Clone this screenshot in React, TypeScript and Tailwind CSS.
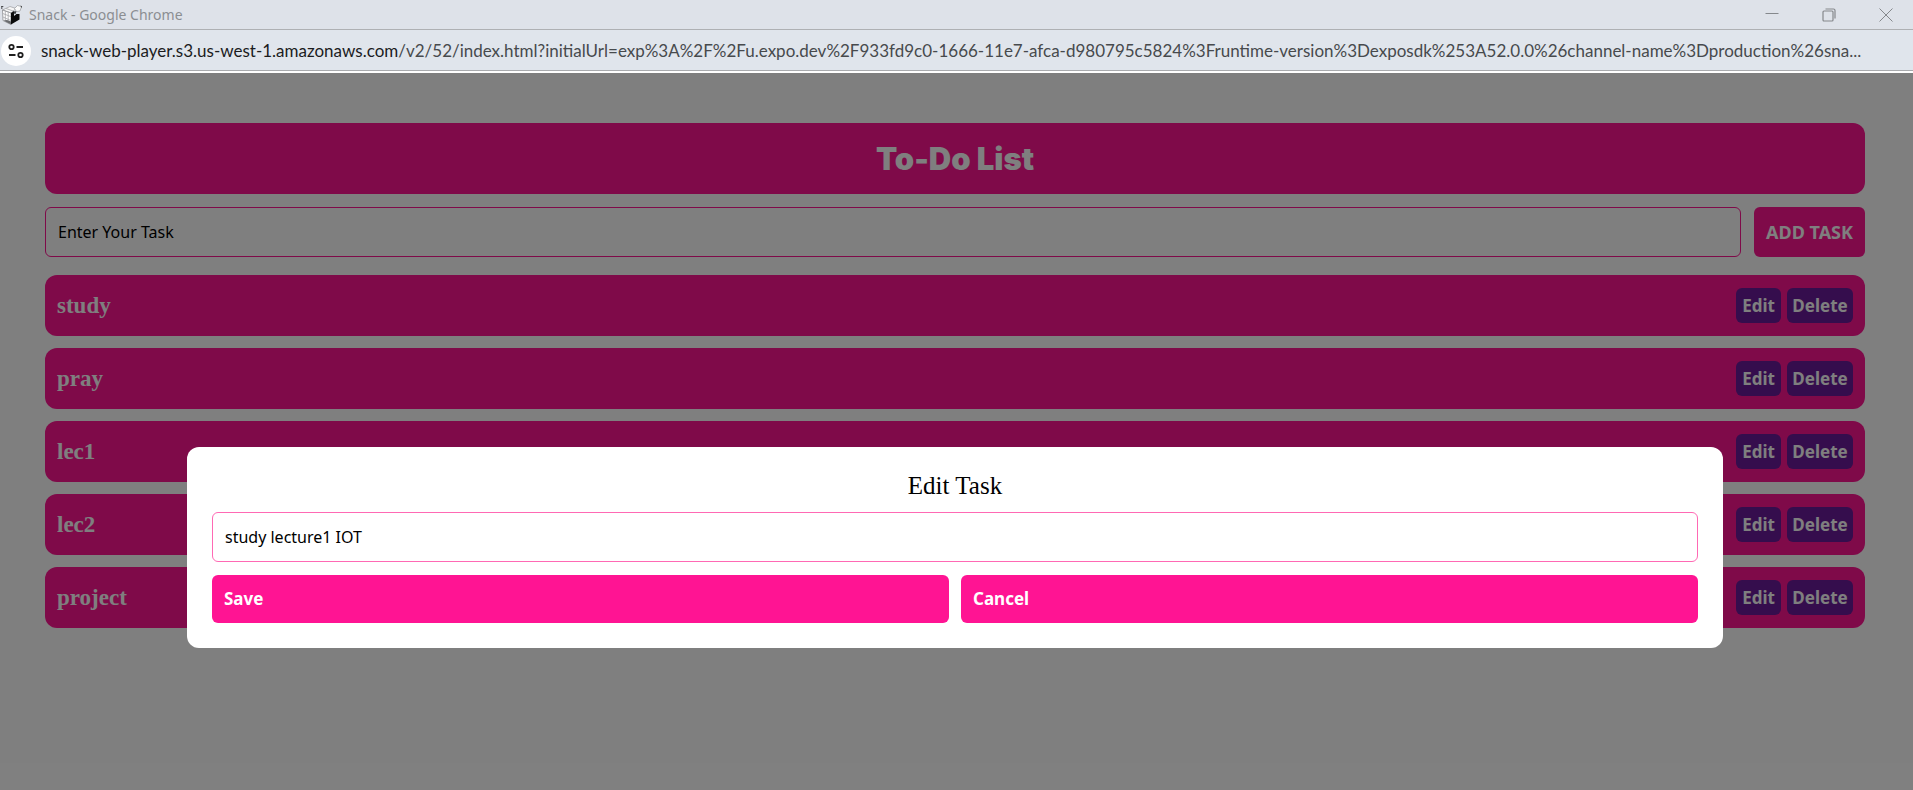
import { useState } from "react";

const HOST = "snack-web-player.s3.us-west-1.amazonaws.com";
const PATH =
  "/v2/52/index.html?initialUrl=exp%3A%2F%2Fu.expo.dev%2F933fd9c0-1666-11e7-afca-d980795c5824%3Fruntime-version%3Dexposdk%253A52.0.0%26channel-name%3Dproduction%26sna...";

function SnackLogo() {
  return (
    <svg width="22" height="22" viewBox="0 0 22 22" aria-hidden="true">
      <path d="M1.500 6 9 2.500l6 2L10 9z" fill="#f6f6f6" stroke="#a3a5a8" strokeWidth=".8" />
      <path d="M1.500 6 10 9v11.500L2 16.500z" fill="#fff" stroke="#8b8d90" strokeWidth=".8" />
      <path d="M1.800 9.500l8.200 3.200M2 13l8 3.600M4.300 7v10.500M7.200 8v11M5 4.500l8 2.800" fill="none" stroke="#a3a5a8" strokeWidth=".8" />
      <path d="M10 9l3-2v5l2.500-2 3 0v5.500L10 20.500z" fill="#0b0b0b" />
      <path d="M2.500 16.500l7.500 4v-3l-4-1.500z" fill="#6a6c6f" />
      <path d="M13.500 4.500l3-3 4 1L19 7l-3.500.5z" fill="#fafafa" stroke="#9a9c9f" strokeWidth=".7" />
      <path d="M13.500 7l2 .5-1 2.500-2-.5zM19.500 1.500l1.500.8-.7 2z" fill="#3a3c3e" />
      <path d="M.3 2.500h2M.8 2v3" stroke="#4a4c4f" strokeWidth="1" />
    </svg>
  );
}

function TitleBar() {
  return (
    <header className="flex h-[30px] items-center border-b border-[#aeb0b3] bg-[#dee2e9] pl-px">
      <SnackLogo />
      <span className="ml-1.5 text-sm leading-5 text-[#8b8e92]">Snack - Google Chrome</span>
      <div className="ml-auto flex h-full items-center gap-[43px] pr-5 text-[#85888c]">
        <button aria-label="Minimize">
          <svg width="14" height="14" viewBox="0 0 14 14" fill="none" stroke="currentColor">
            <path d="M.5 5.500h13" />
          </svg>
        </button>
        <button aria-label="Restore">
          <svg width="14" height="14" viewBox="0 0 14 14" fill="none" stroke="currentColor">
            <rect x="1" y="3" width="10" height="10" rx="1" strokeWidth="1.200" />
            <path d="M3.500 1h8a1.500 1.500 0 0 1 1.500 1.500v8" strokeWidth="1.200" />
          </svg>
        </button>
        <button aria-label="Close">
          <svg width="14" height="14" viewBox="0 0 14 14" fill="none" stroke="currentColor">
            <path d="M.5.5l13 13M13.500.5l-13 13" />
          </svg>
        </button>
      </div>
    </header>
  );
}

function AddressBar() {
  return (
    <div className="flex h-[43px] items-center border-b-2 border-white bg-[#e0e5ec] shadow-[inset_0_-1px_0_#a9abae]">
      <button
        aria-label="View site information"
        className="ml-px flex size-[30px] shrink-0 items-center justify-center rounded-full bg-white"
      >
        <svg width="16" height="16" viewBox="0 0 16 16" fill="none" stroke="#1f1f1f" strokeWidth="1.800">
          <circle cx="3.500" cy="4" r="2.200" />
          <path d="M8.500 4H15M1 12h6.500" />
          <circle cx="12.500" cy="12" r="2.200" />
        </svg>
      </button>
      <p className="ml-2.5 font-['Lato',sans-serif] text-[17px] leading-6 whitespace-nowrap text-[#474a4d]">
        <span className="text-[#1b1c1e]">{HOST}</span>
        {PATH}
      </p>
    </div>
  );
}

function TaskRow({ name, onEdit, onDelete }: { name: string; onEdit: () => void; onDelete: () => void }) {
  return (
    <li className="flex items-center rounded-xl bg-[#ff1493] px-3 py-[13px]">
      <span className="flex-1 font-['Liberation_Serif',serif] text-[23px] leading-6 font-bold text-white">{name}</span>
      <div className="flex gap-1.5">
        <button onClick={onEdit} className="h-[35px] w-[45px] rounded-md bg-[#6a1b9a] text-[17px] font-bold text-white">
          Edit
        </button>
        <button
          onClick={onDelete}
          className="h-[35px] w-[66px] rounded-md bg-[#6a1b9a] text-[17px] font-bold text-white"
        >
          Delete
        </button>
      </div>
    </li>
  );
}

export default function App() {
  const [tasks, setTasks] = useState(["study", "pray", "lec1", "lec2", "project"]);
  const [draft, setDraft] = useState("");
  const [editing, setEditing] = useState<number | null>(0);
  const [editText, setEditText] = useState("study lecture1 IOT");

  const addTask = () => {
    if (!draft.trim()) return;
    setTasks([...tasks, draft.trim()]);
    setDraft("");
  };
  const save = () => {
    setTasks(tasks.map((t, i) => (i === editing ? editText : t)));
    setEditing(null);
  };

  return (
    <div className="flex min-h-screen flex-col overflow-x-hidden font-['Noto_Sans','Open_Sans',sans-serif]">
      <TitleBar />
      <AddressBar />
      <div className="relative flex-1 bg-white">
        <main className="pt-[50px] pr-12 pl-[45px]">
          <h1 className="rounded-xl bg-[#ff1493] py-[15px] text-center font-['Inter',sans-serif] text-[31px] leading-[41px] font-black text-white">
            To-Do List
          </h1>
          <div className="mt-[13px] flex h-[50px] gap-[13px]">
            <input
              aria-label="New task"
              placeholder="Enter Your Task"
              value={draft}
              onChange={(e) => setDraft(e.target.value)}
              className="min-w-0 flex-1 rounded-md border border-[#ff1493] px-3 text-base text-black placeholder:text-black"
            />
            <button onClick={addTask} className="rounded-md bg-[#ff1493] px-3 text-lg font-bold text-white">
              ADD TASK
            </button>
          </div>
          <ul className="mt-[18px] flex flex-col gap-3">
            {tasks.map((name, i) => (
              <TaskRow
                key={i}
                name={name}
                onEdit={() => {
                  setEditing(i);
                  setEditText(name);
                }}
                onDelete={() => setTasks(tasks.filter((_, j) => j !== i))}
              />
            ))}
          </ul>
        </main>
        {editing !== null && (
          <div className="absolute inset-0 bg-black/50 pt-[374px] pr-[190px] pl-[187px]">
            <section role="dialog" aria-labelledby="edit-title" className="rounded-xl bg-white p-[25px]">
              <h2
                id="edit-title"
                className="text-center font-['Liberation_Serif',serif] text-[25px] leading-7 text-black"
              >
                Edit Task
              </h2>
              <input
                aria-labelledby="edit-title"
                value={editText}
                onChange={(e) => setEditText(e.target.value)}
                className="mt-3 h-[50px] w-full rounded-md border border-[#ff69b4] px-3 text-base text-black"
              />
              <div className="mt-[13px] grid grid-cols-2 gap-3">
                <button
                  onClick={save}
                  className="h-12 rounded-md bg-[#ff1493] px-3 text-left text-[17px] font-bold text-white"
                >
                  Save
                </button>
                <button
                  onClick={() => setEditing(null)}
                  className="h-12 rounded-md bg-[#ff1493] px-3 text-left text-[17px] font-bold text-white"
                >
                  Cancel
                </button>
              </div>
            </section>
          </div>
        )}
      </div>
    </div>
  );
}
